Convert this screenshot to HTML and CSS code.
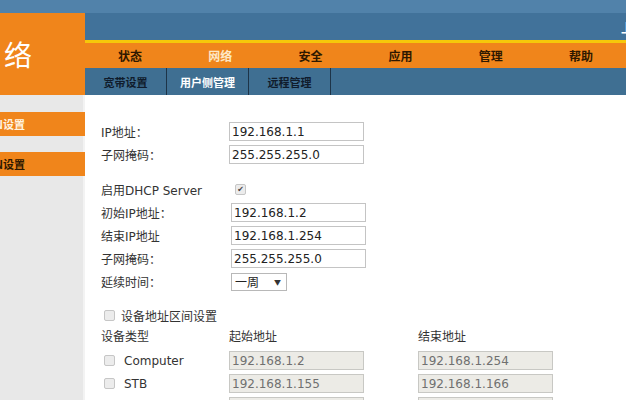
FILE: index.html
```html
<!DOCTYPE html>
<html lang="zh-CN">
    <head>
        <meta charset="UTF-8" />
        <meta name="viewport" content="width=device-width, initial-scale=1.0" />
        <title>网络 - 用户侧管理</title>
        <link rel="stylesheet" href="styles.css">
    </head>
    <body>
        <div class="top-strip"></div>
        <div class="header">
            <div class="logo">络</div>
            <div class="head-right">
                <div class="brand-bar"><span class="brand-tail">上</span></div>
                <div class="menu">
                    <span class="menu-item">状态</span>
                    <span class="menu-item active">网络</span>
                    <span class="menu-item">安全</span>
                    <span class="menu-item">应用</span>
                    <span class="menu-item">管理</span>
                    <span class="menu-item">帮助</span>
                </div>
                <div class="submenu">
                    <span class="sub-item">宽带设置</span>
                    <span class="sub-item active">用户侧管理</span>
                    <span class="sub-item">远程管理</span>
                </div>
            </div>
        </div>

        <div class="page">
            <div class="sidebar">
                <div class="side-item active"><span class="side-text">LAN设置</span></div>
                <div class="side-item"><span class="side-text">WLAN设置</span></div>
            </div>

            <div class="main">
                <div class="group">
                    <div class="form-row">
                        <label class="label">IP地址：</label>
                        <input class="field" type="text" value="192.168.1.1" />
                    </div>
                    <div class="form-row">
                        <label class="label">子网掩码：</label>
                        <input class="field" type="text" value="255.255.255.0" />
                    </div>
                </div>

                <div class="group dhcp">
                    <div class="form-row">
                        <label class="label">启用DHCP Server</label>
                        <span class="check checked">&#10004;</span>
                    </div>
                    <div class="form-row">
                        <label class="label">初始IP地址：</label>
                        <input class="field" type="text" value="192.168.1.2" />
                    </div>
                    <div class="form-row">
                        <label class="label">结束IP地址</label>
                        <input class="field" type="text" value="192.168.1.254" />
                    </div>
                    <div class="form-row">
                        <label class="label">子网掩码：</label>
                        <input class="field" type="text" value="255.255.255.0" />
                    </div>
                    <div class="form-row">
                        <label class="label">延续时间：</label>
                        <div class="select">一周<span class="arrow">&#9660;</span></div>
                    </div>
                </div>

                <div class="range">
                    <div class="range-title">
                        <span class="check"></span>
                        <span>设备地址区间设置</span>
                    </div>
                    <div class="range-grid">
                        <div class="range-head">设备类型</div>
                        <div class="range-head">起始地址</div>
                        <div class="range-head">结束地址</div>

                        <div class="device"><span class="check"></span>Computer</div>
                        <input class="field off" type="text" value="192.168.1.2" disabled />
                        <input class="field off" type="text" value="192.168.1.254" disabled />

                        <div class="device"><span class="check"></span>STB</div>
                        <input class="field off" type="text" value="192.168.1.155" disabled />
                        <input class="field off" type="text" value="192.168.1.166" disabled />

                        <div class="device"><span class="check"></span>Phone</div>
                        <input class="field off" type="text" value="192.168.1.167" disabled />
                        <input class="field off" type="text" value="192.168.1.180" disabled />
                    </div>
                </div>
            </div>
        </div>
    </body>
</html>
```

FILE: styles.css
```css
body {
    margin: 0;
    width: 626px;
    height: 400px;
    overflow: hidden;
    font-family: "DejaVu Sans", "Noto Sans CJK SC", sans-serif;
    font-size: 12px;
    color: #333;
    background: #fff;
}

.top-strip {
    height: 13px;
    background: #5182aa;
}

.header {
    display: flex;
    height: 82px;
}

.logo {
    width: 85px;
    flex-shrink: 0;
    background: #f0851b;
    color: #fff;
    font-family: "Noto Sans CJK SC", sans-serif;
    font-size: 28px;
    line-height: 28px;
    padding: 27px 0 0 4px;
    box-sizing: border-box;
}

.head-right {
    flex: 1;
    display: flex;
    flex-direction: column;
}

.brand-bar {
    height: 27px;
    background: #41729a;
    display: flex;
    justify-content: flex-end;
    align-items: center;
    overflow: hidden;
}

.brand-tail {
    color: #fff;
    font-family: "Noto Sans CJK SC", sans-serif;
    font-size: 12px;
    font-weight: bold;
    margin-right: -7px;
    padding-top: 2px;
}

.menu {
    height: 25px;
    border-top: 3px solid #f6c80a;
    background: #f0851b;
    display: grid;
    grid-template-columns: repeat(6, 1fr);
    align-items: center;
}

.menu-item {
    text-align: center;
    font-family: "Noto Sans CJK SC", sans-serif;
    font-weight: bold;
    font-size: 12px;
    color: #2e1800;
}

.menu-item.active {
    color: #fde8c6;
}

.submenu {
    height: 27px;
    background: #3f6f92;
    display: flex;
}

.sub-item {
    width: 81px;
    border-right: 1px solid #1d3448;
    display: flex;
    justify-content: center;
    align-items: center;
    font-family: "Noto Sans CJK SC", sans-serif;
    font-weight: bold;
    font-size: 11px;
    color: #101c2c;
}

.sub-item.active {
    color: #fff;
}

.page {
    display: flex;
    height: 305px;
}

.sidebar {
    width: 83px;
    flex-shrink: 0;
    background: #e8e8e8;
    border-right: 2px solid #f3f3f3;
    padding-top: 17px;
    display: flex;
    flex-direction: column;
    gap: 16px;
}

.side-item {
    height: 24px;
    margin-right: -2px;
    background: #f0851b;
    display: flex;
    align-items: center;
}

.side-text {
    width: 25px;
    overflow: hidden;
    white-space: nowrap;
    direction: rtl;
    font-family: "Noto Sans CJK SC", sans-serif;
    font-weight: bold;
    font-size: 11px;
    color: #2e1800;
}

.side-item.active .side-text {
    color: #fff4e0;
}

.main {
    flex: 1;
    padding: 25px 0 0 16px;
}

.form-row {
    display: flex;
    align-items: center;
    height: 23px;
}

.label {
    width: 128px;
    flex-shrink: 0;
}

.field {
    width: 135px;
    height: 19px;
    box-sizing: border-box;
    border: 1px solid #c4c4c4;
    padding: 0 2px;
    font-family: "DejaVu Sans", sans-serif;
    font-size: 12px;
    color: #222;
    background: #fff;
    margin: 0;
}

.field.off {
    background: #ecebe6;
    color: #707070;
    border-color: #c8c8c4;
}

.dhcp {
    margin-top: 12px;
}

.dhcp .label {
    width: 130px;
}

.check {
    display: inline-flex;
    justify-content: center;
    align-items: center;
    width: 9px;
    height: 9px;
    border: 1px solid #c6c6c6;
    border-radius: 2px;
    background: #ececec;
    font-size: 8px;
    line-height: 1;
    color: #444;
    margin-left: 4px;
}

.select {
    width: 56px;
    height: 18px;
    box-sizing: border-box;
    border: 1px solid #b8b8b8;
    display: flex;
    align-items: center;
    justify-content: space-between;
    padding: 0 5px 0 3px;
    font-family: "Noto Sans CJK SC", sans-serif;
    font-size: 12px;
    color: #222;
}

.arrow {
    font-size: 7px;
    color: #333;
}

.range {
    margin-top: 12px;
}

.range-title {
    display: flex;
    align-items: center;
    gap: 6px;
    height: 21px;
}

.range-title .check {
    margin-left: 3px;
}

.range-grid {
    display: grid;
    grid-template-columns: 128px 189px 135px;
    grid-auto-rows: 23px;
    align-items: center;
}

.range-head {
    height: 20px;
    line-height: 20px;
}

.range-grid .range-head {
    align-self: start;
    margin-top: 1px;
}

.device {
    display: flex;
    align-items: center;
    gap: 9px;
    font-size: 12px;
}

.device .check {
    margin-left: 3px;
}
```
